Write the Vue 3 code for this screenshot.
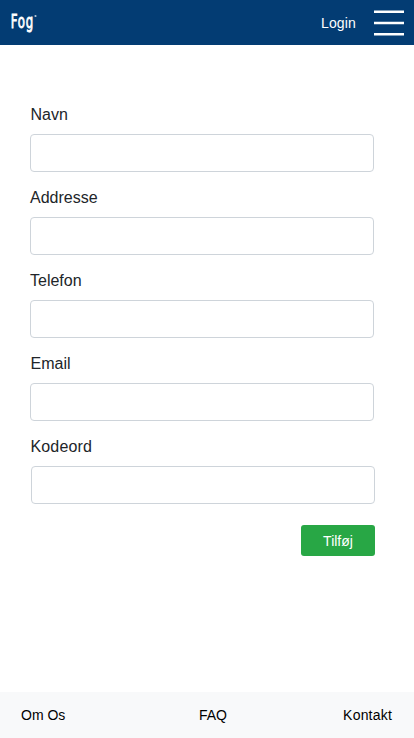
<script setup>
const fields = [
  { id: 'navn', label: 'Navn', type: 'text' },
  { id: 'addresse', label: 'Addresse', type: 'text' },
  { id: 'telefon', label: 'Telefon', type: 'tel' },
  { id: 'email', label: 'Email', type: 'email' },
  { id: 'kodeord', label: 'Kodeord', type: 'password' },
]
const links = ['Om Os', 'FAQ', 'Kontakt']
</script>

<template>
  <div class="page">
    <header class="bar">
      <svg class="logo" width="32" height="38" viewBox="0 0 32 38">
        <text transform="translate(0.8 25.8) scale(0.6 1)">Fog</text>
        <circle cx="25.5" cy="14" r="1.1" />
      </svg>
      <a class="login">Login</a>
      <svg class="menu" width="30" height="26" viewBox="0 0 30 26">
        <path d="M0 1.75H30M0 13H30M0 24.25H30" />
      </svg>
    </header>

    <form class="form" @submit.prevent>
      <div v-for="f in fields" :key="f.id" class="group" :class="f.id">
        <label :for="f.id">{{ f.label }}</label>
        <input :id="f.id" :type="f.type" />
      </div>
      <button type="submit">Tilføj</button>
    </form>

    <footer class="foot">
      <a v-for="l in links" :key="l">{{ l }}</a>
    </footer>
  </div>
</template>

<style>
body {
  background: #fff;
}
</style>

<style scoped>
.page {
  box-sizing: border-box;
  height: 738px;
  display: flex;
  flex-direction: column;
  font-family: "Liberation Sans", Arial, sans-serif;
  color: #212529;
}
.bar {
  box-sizing: border-box;
  height: 45px;
  padding: 0 10px;
  display: flex;
  align-items: center;
  background: #033c73;
}
.logo {
  margin-bottom: 3px;
}
.logo text {
  font-family: "DejaVu Sans", sans-serif;
  font-size: 19.6px;
  letter-spacing: 1.1px;
  fill: #fff;
  stroke: #fff;
  stroke-width: 0.9;
}
.logo circle {
  fill: #b8c8d8;
}
.login {
  margin-left: auto;
  margin-right: 18px;
  font-size: 14px;
  line-height: 20px;
  letter-spacing: 0.15px;
  color: #fff;
}
.menu {
  stroke: #fff;
  stroke-width: 2.5;
}
.form {
  flex: 1;
  padding: 58px 39px 0 30px;
  display: flex;
  flex-direction: column;
}
.group {
  width: 344px;
  margin-bottom: 14px;
}
label {
  display: block;
  height: 24px;
  margin-bottom: 7px;
  font-size: 16px;
  line-height: 24px;
}
.navn label,
.email label {
  padding-left: 0.5px;
}
.kodeord label {
  padding-left: 0.5px;
  letter-spacing: 0.15px;
}
input {
  display: block;
  box-sizing: border-box;
  width: 344px;
  height: 38px;
  padding: 6px 12px;
  border: 1px solid #ced4da;
  border-radius: 4px;
  background: #fff;
  font: inherit;
}
.kodeord input {
  margin-left: 1px;
}
button {
  align-self: flex-end;
  width: 74px;
  height: 31px;
  margin-top: 7px;
  padding: 2px 0 0;
  border: 0;
  border-radius: 3px;
  background: #28a745;
  color: #fff;
  font-family: inherit;
  font-size: 14px;
  line-height: 21px;
}
.foot {
  box-sizing: border-box;
  height: 46px;
  padding: 0 22px 0 21px;
  display: grid;
  grid-template-columns: 1fr auto 1fr;
  align-items: center;
  background: #f8f9fa;
  color: #000;
  font-size: 14px;
}
.foot a:nth-child(2) {
  padding-left: 13px;
}
.foot a:last-child {
  text-align: right;
  letter-spacing: 0.2px;
}
</style>
